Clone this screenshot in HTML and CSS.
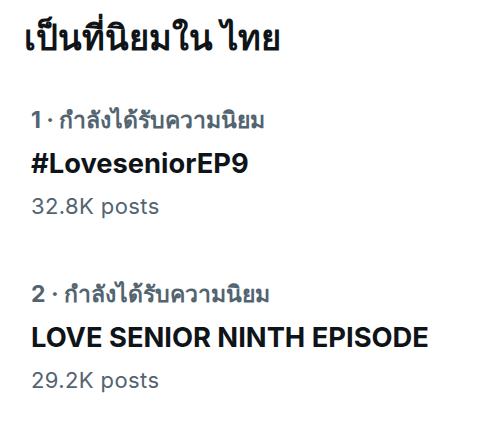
FILE: index.html
```html
<!DOCTYPE html>
<html>
<head>
	<meta charset="utf-8">
	<link rel="stylesheet" href="styles.css">
</head>
<body>
	<div class="panel">
		<h2 class="panel-title">เป็นที่นิยมใน ไทย</h2>
		<div class="trend">
			<div class="trend-meta">1 · กำลังได้รับความนิยม</div>
			<div class="trend-name">#LoveseniorEP9</div>
			<div class="trend-count">32.8K posts</div>
		</div>
		<div class="trend">
			<div class="trend-meta">2 · กำลังได้รับความนิยม</div>
			<div class="trend-name">LOVE SENIOR NINTH EPISODE</div>
			<div class="trend-count">29.2K posts</div>
		</div>
	</div>
</body>
</html>
```

FILE: styles.css
```css
body {
	margin: 0;
	background: #fff;
	color: #0f1419;
	font-family: Inter, "Noto Sans", sans-serif;
}

.panel {
	padding: 15px 0 0 0;
}

.panel-title {
	margin: 0 0 0 24px;
	height: 50px;
	font-size: 34.5px;
	font-weight: 700;
	line-height: 46px;
}

.trend {
	padding: 40px 31px 18px;
}

.trend-meta {
	color: #536471;
	font-size: 23px;
	font-weight: 700;
	line-height: 30px;
}

.trend-name {
	margin-top: 13px;
	font-size: 27.3px;
	font-weight: 700;
	line-height: 32px;
}

.trend-count {
	margin-top: 11px;
	color: #536471;
	font-size: 22px;
	letter-spacing: 0.4px;
	line-height: 30px;
}
```
